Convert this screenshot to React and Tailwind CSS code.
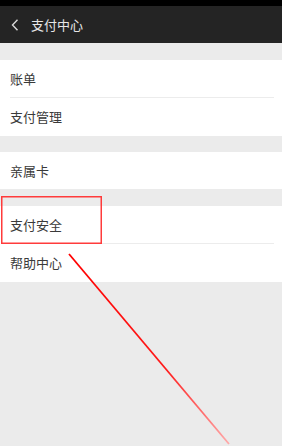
export default function App() {
    const font = { fontFamily: '"Noto Sans CJK SC", "Noto Sans", sans-serif' };

    return (
        <div className="relative w-[282px] h-[446px] bg-[#ebebeb] overflow-hidden" style={font}>
            {/* Status bar */}
            <div className="h-[6px] bg-black"></div>

            {/* Header */}
            <header className="h-[37px] bg-[#242424] flex items-center">
                <svg className="ml-[11px] w-[8px] h-[12px]" viewBox="0 0 8 12" fill="none">
                    <path d="M6.5 0.8 L1.5 6 L6.5 11.2" stroke="#d8d8d8" strokeWidth="1.4" />
                </svg>
                <h1 className="ml-[12px] text-[13px] text-[#e6e6e6] leading-none">支付中心</h1>
            </header>

            {/* Group 1 */}
            <div className="mt-[17px] bg-white">
                <div className="h-[37px] flex items-center pl-[10px] text-[13px] text-[#3a3a3a]">账单</div>
                <div className="ml-[10px] mr-[8px] h-px bg-[#ececec]"></div>
                <div className="h-[38px] flex items-center pl-[10px] text-[13px] text-[#3a3a3a]">支付管理</div>
            </div>

            {/* Group 2 */}
            <div className="mt-[16px] bg-white">
                <div className="h-[37px] flex items-center pl-[10px] text-[13px] text-[#3a3a3a]">亲属卡</div>
            </div>

            {/* Group 3 */}
            <div className="mt-[17px] bg-white">
                <div className="h-[37px] flex items-center pl-[10px] text-[13px] text-[#3a3a3a]">支付安全</div>
                <div className="ml-[10px] mr-[8px] h-px bg-[#ececec]"></div>
                <div className="h-[38px] flex items-center pl-[10px] text-[13px] text-[#3a3a3a]">帮助中心</div>
            </div>

            {/* Annotation: red box + line */}
            <svg className="absolute left-0 top-0 w-[282px] h-[446px] pointer-events-none" viewBox="0 0 282 446">
                <defs>
                    <linearGradient id="fade" gradientUnits="userSpaceOnUse" x1="69" y1="254" x2="229" y2="444">
                        <stop offset="0" stopColor="#ff0000" />
                        <stop offset="0.6" stopColor="#ff1a1a" />
                        <stop offset="1" stopColor="#ffaaaa" />
                    </linearGradient>
                </defs>
                <rect x="1.75" y="196.75" width="99.5" height="46.5" fill="none" stroke="#ff3b3b" strokeWidth="1.5" />
                <line x1="69" y1="254" x2="229" y2="444" stroke="url(#fade)" strokeWidth="1.8" />
            </svg>
        </div>
    );
}
